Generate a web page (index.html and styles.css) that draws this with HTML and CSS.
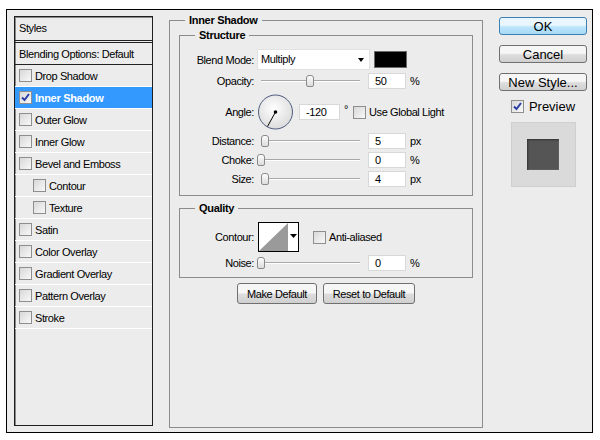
FILE: index.html
```html
<!DOCTYPE html>
<html lang="en">
<head>
<meta charset="UTF-8">
<title>Layer Style</title>
<link rel="stylesheet" href="styles.css">
</head>
<body>
<div class="dialog">

    <div class="styles-list">
        <div class="list-head">Styles</div>
        <div class="list-item plain">Blending Options: Default</div>
        <div class="list-item"><span class="check"></span>Drop Shadow</div>
        <div class="list-item selected"><span class="check"><svg width="11" height="11" viewBox="0 0 11 11"><path d="M2 5.5 L4.5 8 L9 2" fill="none" stroke="#2a3ea6" stroke-width="2"/></svg></span>Inner Shadow</div>
        <div class="list-item"><span class="check"></span>Outer Glow</div>
        <div class="list-item"><span class="check"></span>Inner Glow</div>
        <div class="list-item"><span class="check"></span>Bevel and Emboss</div>
        <div class="list-item sub"><span class="check"></span>Contour</div>
        <div class="list-item sub"><span class="check"></span>Texture</div>
        <div class="list-item"><span class="check"></span>Satin</div>
        <div class="list-item"><span class="check"></span>Color Overlay</div>
        <div class="list-item"><span class="check"></span>Gradient Overlay</div>
        <div class="list-item"><span class="check"></span>Pattern Overlay</div>
        <div class="list-item"><span class="check"></span>Stroke</div>
    </div>

    <fieldset class="group effect">
        <legend>Inner Shadow</legend>

        <fieldset class="group inner structure">
            <legend>Structure</legend>
            <div class="row">
                <span class="label">Blend Mode:</span>
                <div class="select">Multiply<span class="arrow"></span></div>
                <span class="swatch"></span>
            </div>
            <div class="row">
                <span class="label">Opacity:</span>
                <div class="slider"><span class="thumb" style="left: 49px"></span></div>
                <span class="num">50</span><span class="unit">%</span>
            </div>
            <div class="row angle-row">
                <span class="label">Angle:</span>
                <svg class="dial" width="37" height="36" viewBox="0 0 37 36">
                    <defs>
                        <radialGradient id="dialFill" cx="0.45" cy="0.4" r="0.6">
                            <stop offset="0" stop-color="#ffffff"/>
                            <stop offset="1" stop-color="#dcdcdc"/>
                        </radialGradient>
                    </defs>
                    <circle cx="18.5" cy="18" r="17" fill="url(#dialFill)" stroke="#4e5c80" stroke-width="1"/>
                    <line x1="18.5" y1="18" x2="10.5" y2="32.5" stroke="#000" stroke-width="1"/>
                    <circle cx="18.5" cy="18" r="1.8" fill="#000"/>
                </svg>
                <span class="num wide">-120</span>
                <span class="deg">&deg;</span>
                <span class="check"></span>
                <span class="opt">Use Global Light</span>
            </div>
            <div class="row">
                <span class="label">Distance:</span>
                <div class="slider"><span class="thumb" style="left: 4px"></span></div>
                <span class="num">5</span><span class="unit">px</span>
            </div>
            <div class="row">
                <span class="label">Choke:</span>
                <div class="slider"><span class="thumb" style="left: 0px"></span></div>
                <span class="num">0</span><span class="unit">%</span>
            </div>
            <div class="row">
                <span class="label">Size:</span>
                <div class="slider"><span class="thumb" style="left: 4px"></span></div>
                <span class="num">4</span><span class="unit">px</span>
            </div>
        </fieldset>

        <fieldset class="group inner quality">
            <legend>Quality</legend>
            <div class="row contour-row">
                <span class="label">Contour:</span>
                <svg class="contour" width="41" height="30" viewBox="0 0 41 30">
                    <rect x="0.5" y="0.5" width="40" height="29" fill="#fff" stroke="#000"/>
                    <polygon points="1,29 30,1 30,29" fill="#9a9a9a"/>
                    <polygon points="32,12 39,12 35.5,16" fill="#000"/>
                </svg>
                <span class="check"></span>
                <span class="opt">Anti-aliased</span>
            </div>
            <div class="row">
                <span class="label">Noise:</span>
                <div class="slider"><span class="thumb" style="left: 0px"></span></div>
                <span class="num">0</span><span class="unit">%</span>
            </div>
        </fieldset>

        <div class="defaults">
            <button class="btn-sm make">Make Default</button>
            <button class="btn-sm reset">Reset to Default</button>
        </div>
    </fieldset>

    <div class="side">
        <button class="btn default">OK</button>
        <button class="btn">Cancel</button>
        <button class="btn">New Style...</button>
        <div class="preview-toggle">
            <span class="check"><svg width="11" height="11" viewBox="0 0 11 11"><path d="M2 5.5 L4.5 8 L9 2" fill="none" stroke="#2a3ea6" stroke-width="2"/></svg></span>
            Preview
        </div>
        <div class="preview">
            <div class="preview-swatch"></div>
        </div>
    </div>

</div>
</body>
</html>
```

FILE: styles.css
```css
body {
    margin: 0;
    background: #fff;
    font-family: "Liberation Sans", Arial, sans-serif;
    font-size: 11px;
    letter-spacing: -0.4px;
    color: #000;
}
.dialog {
    margin: 9px 0 0 6px;
    width: 587px;
    height: 424px;
    box-sizing: border-box;
    border: 1px solid #000;
    background: #ececec;
    display: flex;
    align-items: flex-start;
}

/* left list of effects */
.styles-list {
    margin: 6px 0 0 7px;
    width: 139px;
    height: 410px;
    box-sizing: border-box;
    border: 1px solid #1e1e1e;
    box-shadow: inset 1px 1px 0 #8a8a8a;
}
.list-head {
    height: 23px;
    line-height: 23px;
    padding-left: 4px;
    border-bottom: 3px double #222;
}
.list-item {
    height: 21px;
    display: flex;
    align-items: center;
    padding-left: 4px;
    border-bottom: 1px solid #fff;
}
.list-item.plain {
    border-bottom-color: #222;
}
.list-item.sub {
    padding-left: 18px;
}
.list-item.selected {
    background: #3399ff;
    color: #fff;
    font-weight: bold;
    letter-spacing: -0.3px;
}
.list-item .check {
    margin-right: 3px;
}

.check {
    display: inline-flex;
    align-items: center;
    justify-content: center;
    width: 13px;
    height: 13px;
    box-sizing: border-box;
    border: 1px solid #8e8e8e;
    background: linear-gradient(135deg, #d8d8d8, #f8f8f8);
    flex: none;
}

/* group boxes */
.group {
    margin: 0;
    border: 1px solid #8c8c8c;
    min-width: 0;
    box-sizing: border-box;
}
.group legend {
    font-weight: bold;
    line-height: 13px;
    padding: 0 4px;
    letter-spacing: -0.3px;
}
.effect {
    margin: 4px 0 0 16px;
    width: 314px;
    height: 414px;
    padding: 2px 9px 0;
}
.effect > legend {
    margin-left: 6px;
}
.inner {
    padding: 0;
}
.inner > legend {
    margin-left: 15px;
}
.structure {
    padding: 7px 0 8px;
}
.quality {
    margin-top: 6px;
    padding: 7px 0 6px;
}

.row {
    display: flex;
    align-items: center;
    height: 16px;
    margin-top: 3px;
}
.row:first-of-type {
    margin-top: 0;
}
.label {
    width: 74px;
    margin-right: 3px;
    text-align: right;
    flex: none;
}
.structure .row:first-of-type {
    height: 21px;
}
.angle-row {
    height: 36px;
    margin-top: 5px;
    margin-bottom: 1px;
}
.contour-row {
    height: 30px;
}

.select {
    position: relative;
    width: 113px;
    height: 21px;
    box-sizing: border-box;
    background: #fff;
    border: 1px solid #e2e2e2;
    padding-left: 3px;
    line-height: 19px;
}
.select .arrow {
    position: absolute;
    right: 5px;
    top: 8px;
    border-left: 3.5px solid transparent;
    border-right: 3.5px solid transparent;
    border-top: 4px solid #000;
}
.swatch {
    width: 33px;
    height: 17px;
    margin-left: 4px;
    box-sizing: border-box;
    background: #000;
    border: 1px solid #6a6a6a;
}

.slider {
    position: relative;
    width: 107px;
    height: 16px;
    margin-right: 4px;
}
.slider::before {
    content: "";
    display: block;
    margin: 7px 4px 0;
    height: 1px;
    background: #a8a8a8;
    border-bottom: 1px solid #fff;
}
.thumb {
    position: absolute;
    top: 2px;
    width: 8px;
    height: 12px;
    box-sizing: border-box;
    border: 1px solid #8a8a8a;
    border-radius: 3px 3px 2px 2px;
    background: linear-gradient(#fdfdfd, #dcdcdc);
}

.num {
    width: 38px;
    height: 16px;
    box-sizing: border-box;
    background: #fff;
    border: 1px solid #d8d8d8;
    padding-left: 6px;
    line-height: 14px;
}
.num.wide {
    width: 41px;
    margin-left: 5px;
}
.unit {
    margin-left: 4px;
}
.deg {
    margin: -6px 0 0 4px;
    width: 9px;
}
.opt {
    margin-left: 3px;
}
.contour {
    margin-left: 1px;
}
.contour-row .check {
    margin-left: 14px;
}

.defaults {
    display: flex;
    justify-content: center;
    gap: 6px;
    margin-top: 5px;
}
.btn-sm {
    height: 21px;
    padding: 0;
    border: 1px solid #707070;
    border-radius: 3px;
    background: linear-gradient(#f6f6f6 45%, #dddddd 55%, #cfcfcf);
    font-family: inherit;
    font-size: 11px;
    letter-spacing: -0.4px;
    color: #000;
}
.btn-sm.make {
    width: 80px;
}
.btn-sm.reset {
    width: 92px;
}

/* right column */
.side {
    margin: 7px 0 0 16px;
    width: 88px;
    display: flex;
    flex-direction: column;
    align-items: center;
    letter-spacing: 0;
}
.btn {
    width: 88px;
    height: 18px;
    margin-bottom: 10px;
    padding: 0;
    box-sizing: border-box;
    border: 1px solid #707070;
    border-radius: 3px;
    background: linear-gradient(#f6f6f6 45%, #dddddd 55%, #d0d0d0);
    font-family: inherit;
    font-size: 13px;
    line-height: 15px;
    color: #000;
}
.btn.default {
    border-color: #3c7fb1;
    background: linear-gradient(#eaf6fd 45%, #bee6fd 55%, #a7d9f5);
}
.preview-toggle {
    display: flex;
    align-items: center;
    gap: 5px;
    margin-top: -2px;
    font-size: 13px;
}
.preview {
    width: 65px;
    height: 65px;
    margin-top: 8px;
    box-sizing: border-box;
    border: 1px solid #cfcfcf;
    background: #dadada;
    display: flex;
    align-items: center;
    justify-content: center;
}
.preview-swatch {
    width: 32px;
    height: 31px;
    background: #555;
    box-shadow: inset 1px 1px 2px #333, inset -1px -1px 0 #626262;
}
```
